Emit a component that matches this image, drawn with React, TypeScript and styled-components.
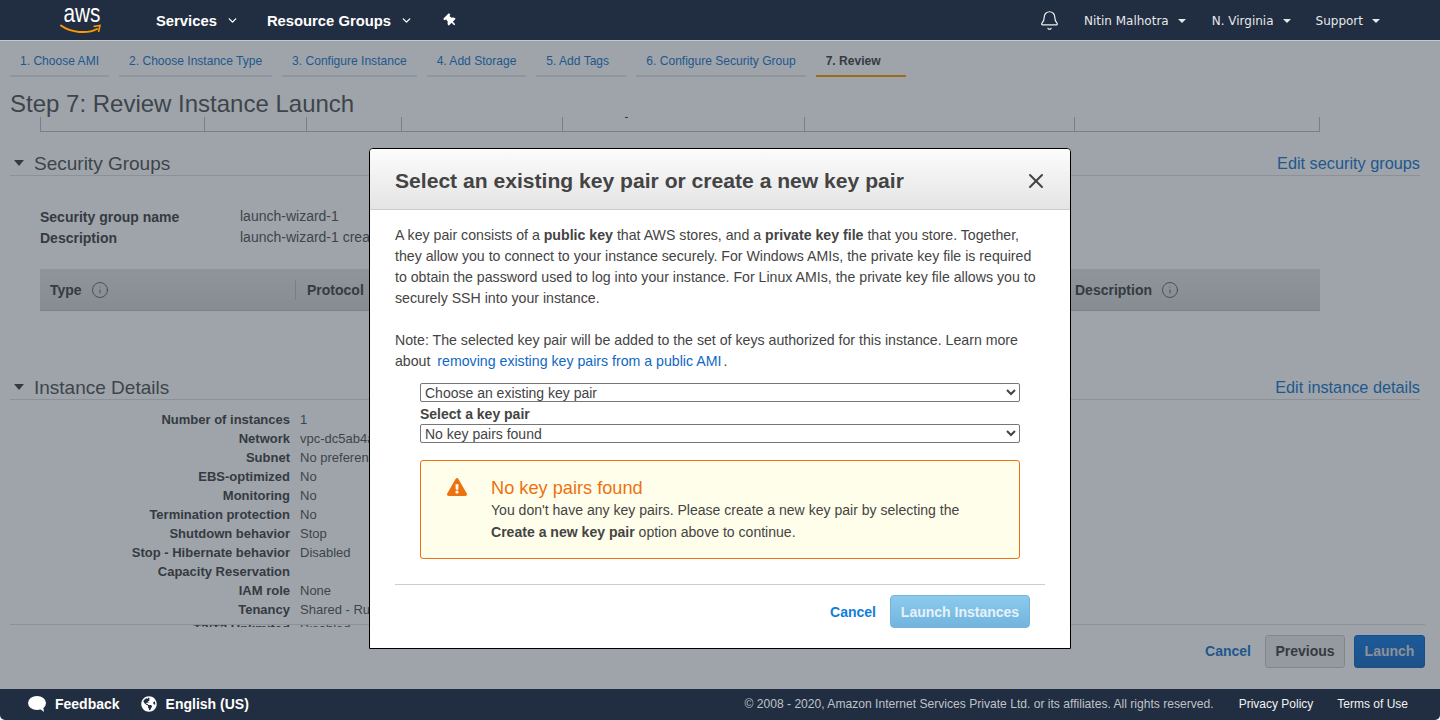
import React from 'react'
import styled, { createGlobalStyle } from 'styled-components'
import { Bell, ChevronDown, Info, X } from 'lucide-react'
import { FaExclamationTriangle, FaGlobeAmericas, FaThumbtack } from 'react-icons/fa'

const GlobalStyle = createGlobalStyle`
  html, body {
    margin: 0;
    padding: 0;
    height: 100%;
    overflow: hidden;
    background: #fff;
    font-family: "Liberation Sans", Arial, sans-serif;
    color: #444;
  }
  * {
    box-sizing: border-box;
  }
`

const Page = styled.div`
  position: relative;
  width: 1440px;
  height: 720px;
  display: flex;
  flex-direction: column;
  overflow: hidden;
`
const TopBar = styled.header`
  flex: none;
  height: 41px;
  display: flex;
  align-items: center;
  background: #212d40;
  border-bottom: 1px solid #c3c8cd;
  color: #fff;
  padding-left: 60px;
  padding-right: 60px;
`
const Logo = styled.div`
  position: relative;
  width: 41px;
  height: 32px;
  margin-right: 55px;
  margin-top: -2px;
`
const LogoText = styled.span`
  display: block;
  text-align: center;
  font-size: 25px;
  line-height: 20px;
  transform: scaleX(0.83);
  color: #fff;
`
const LogoSmile = styled.svg`
  position: absolute;
  left: 0;
  top: 21px;
`
const MainNav = styled.button<{ $gap: number }>`
  display: flex;
  align-items: center;
  gap: 9px;
  margin-right: ${p => p.$gap}px;
  background: none;
  border: 0;
  padding: 1px 0 0;
  color: #fff;
  font-family: inherit;
  font-size: 14.8px;
  font-weight: bold;
`
const PinIcon = styled(FaThumbtack)`
  font-size: 13px;
  transform: rotate(-45deg);
  color: #fff;
`
const Spacer = styled.div`
  flex: 1;
`
const BellIcon = styled(Bell)`
  margin-right: 24px;
  color: #eee;
`
const UserNav = styled.button<{ $gap: number }>`
  display: flex;
  align-items: center;
  gap: 9px;
  margin-right: ${p => p.$gap}px;
  background: none;
  border: 0;
  padding: 1px 0 0;
  color: #e6e8ea;
  font-family: "DejaVu Sans", Verdana, sans-serif;
  font-size: 12px;
`
const Caret = styled.span`
  width: 0;
  height: 0;
  border-left: 4px solid transparent;
  border-right: 4px solid transparent;
  border-top: 4px solid #e6e8ea;
`

const Main = styled.main`
  position: relative;
  flex: 1;
  min-height: 0;
  display: flex;
  flex-direction: column;
  background: #fff;
`
const Tabs = styled.nav`
  flex: none;
  display: flex;
  gap: 10px;
  padding: 0 10px;
  height: 36px;
`
const Tab = styled.a<{ $active?: boolean }>`
  display: flex;
  align-items: center;
  min-width: 90px;
  height: 36px;
  padding: 5px 10px 0;
  font-size: 12.06px;
  color: ${p => (p.$active ? '#444' : '#1b78cc')};
  font-weight: ${p => (p.$active ? 'bold' : 'normal')};
  border-bottom: 2px solid ${p => (p.$active ? '#ff9900' : '#e4e6e8')};
`
const Heading = styled.h1`
  flex: none;
  margin: 0;
  padding: 12px 10px 0;
  height: 40px;
  font-size: 24px;
  line-height: 30px;
  font-weight: normal;
  color: #555;
`
const Scroller = styled.div`
  flex: none;
  height: 510px;
  overflow: hidden;
  padding: 0 20px 0 10px;
`
const TableEnd = styled.div`
  display: flex;
  height: 15px;
  margin: 0 0 0 30px;
  width: 1280px;
  border-bottom: 1px solid #bbb;
  border-left: 1px solid #bbb;
`
const TableEndCell = styled.div<{ $width: number }>`
  flex: none;
  width: ${p => p.$width}px;
  border-right: 1px solid #bbb;
`
const ClippedMark = styled.div`
  width: 3px;
  height: 1px;
  margin-left: 62px;
  background: #444;
`
const SectionHead = styled.div<{ $top: number }>`
  display: flex;
  align-items: flex-end;
  height: 30px;
  margin-top: ${p => p.$top}px;
  border-bottom: 1px solid #ddd;
  padding-left: 4px;
`
const Triangle = styled.span`
  width: 0;
  height: 0;
  border-left: 5.5px solid transparent;
  border-right: 5.5px solid transparent;
  border-top: 6px solid #444;
  margin: 0 10px 9px 0;
`
const SectionTitle = styled.h2`
  flex: 1;
  margin: 0;
  font-size: 19px;
  line-height: 22px;
  font-weight: normal;
  color: #555;
`
const EditLink = styled.a`
  font-size: 16.3px;
  line-height: 19px;
  color: #1b78cc;
  margin-bottom: 2px;
`
const GroupInfo = styled.dl`
  display: grid;
  grid-template-columns: 200px 1fr;
  grid-auto-rows: 21px;
  align-items: center;
  margin: 30px 0 0 30px;
  font-size: 14px;
`
const GroupLabel = styled.dt`
  font-weight: bold;
`
const GroupValue = styled.dd`
  margin: 0;
  margin-top: -2px;
  color: #555;
`
const RulesHead = styled.div`
  display: flex;
  align-items: center;
  width: 1280px;
  height: 42px;
  margin: 21px 0 0 30px;
  padding-left: 10px;
  font-size: 14px;
  font-weight: bold;
  background: linear-gradient(#e4e4e4, #d5d5d5);
  border-bottom: 1px solid #c4c4c4;
`
const RulesColumn = styled.div<{ $width: number }>`
  flex: none;
  display: flex;
  align-items: center;
  gap: 9px;
  width: ${p => p.$width}px;
  height: 20px;
`
const RulesDivider = styled.div`
  flex: none;
  width: 1px;
  height: 20px;
  background: #bbb;
  margin-right: 11px;
`
const DetailRows = styled.dl`
  display: grid;
  grid-template-columns: 280px 1fr;
  column-gap: 10px;
  grid-auto-rows: 19px;
  align-items: center;
  margin: 10px 0 0 0;
  font-size: 13px;
`
const DetailLabel = styled.dt`
  text-align: right;
  font-weight: bold;
`
const DetailValue = styled.dd`
  margin: 0;
  color: #555;
`
const Actions = styled.div`
  flex: none;
  display: flex;
  align-items: center;
  justify-content: flex-end;
  margin: -3px 15px 0 10px;
  height: 61px;
  padding: 0 0 8px;
  border-top: 1px solid #ddd;
`
const TextButton = styled.a<{ $light?: boolean }>`
  font-size: 14px;
  font-weight: bold;
  color: ${p => (p.$light ? '#0f7edb' : '#1b78cc')};
`
const PreviousButton = styled.button`
  width: 80px;
  height: 33px;
  margin-left: 14px;
  font-family: inherit;
  font-size: 14px;
  font-weight: bold;
  color: #444;
  background: #eee;
  border: 1px solid #ccc;
  border-radius: 3px;
`
const LaunchButton = styled.button`
  width: 71px;
  height: 33px;
  margin-left: 9px;
  font-family: inherit;
  font-size: 14px;
  font-weight: bold;
  color: #ddd;
  background: linear-gradient(#1a7be0, #1a6cc4);
  border: 1px solid #1266c8;
  border-radius: 3px;
`

const Backdrop = styled.div`
  position: absolute;
  inset: 0;
  background: rgba(35, 47, 62, 0.44);
`

const BottomBar = styled.footer`
  flex: none;
  height: 31px;
  display: flex;
  align-items: center;
  background: #212d40;
  color: #fff;
  padding: 0 32px 1px 28px;
  font-size: 12px;
  border-radius: 0 0 5px 5px;
`
const FooterTool = styled.span<{ $gap: number }>`
  display: flex;
  align-items: center;
  gap: 9px;
  margin-right: ${p => p.$gap}px;
  font-size: 14px;
  font-weight: bold;
`
const Copyright = styled.span`
  color: #bfc3c9;
  font-size: 12.1px;
  margin-right: 25px;
`
const FooterLink = styled.a<{ $gap?: number }>`
  color: #f2f3f3;
  margin-left: ${p => p.$gap || 0}px;
`

const ModalLayer = styled.div`
  position: absolute;
  inset: 0;
  display: flex;
  justify-content: center;
  align-items: flex-start;
  padding-top: 148px;
`
const Modal = styled.section`
  width: 702px;
  height: 501px;
  background: #fff;
  border: 1px solid #000;
  border-radius: 4px 4px 0 0;
`
const ModalHead = styled.div`
  display: flex;
  align-items: center;
  justify-content: space-between;
  height: 61px;
  padding: 3px 22px 0 25px;
  border-radius: 3px 3px 0 0;
  background: linear-gradient(#fcfcfc, #e4e4e4);
  border-bottom: 1px solid #ccc;
`
const ModalTitle = styled.h3`
  margin: 0;
  font-size: 21.1px;
  font-weight: bold;
  color: #444;
`
const CloseIcon = styled(X)`
  color: #444;
`
const ModalBody = styled.div`
  padding: 15px 25px 0;
  font-size: 14.16px;
  line-height: 21px;
  color: #444;
`
const Paragraph = styled.p`
  margin: 0 0 21px;
`
const ModalLink = styled.a`
  color: #0f68c4;
  margin-left: 3px;
  margin-right: 2px;
`
const FormBlock = styled.div`
  margin: -10px 50px 0;
`
const KeySelect = styled.select`
  display: block;
  width: 600px;
  height: 19px;
  padding: 0;
  font-family: inherit;
  font-size: 14px;
  color: #444;
  background: #fff;
  border: 1px solid #767676;
  border-radius: 2px;
`
const FieldLabel = styled.label`
  display: block;
  height: 22px;
  line-height: 24px;
  font-size: 14px;
  font-weight: bold;
`
const Alert = styled.div`
  display: flex;
  width: 600px;
  height: 99px;
  margin-top: 17px;
  padding: 16px 0 0 26px;
  background: #fffeea;
  border: 1px solid #ec7211;
  border-radius: 3px;
`
const AlertIcon = styled(FaExclamationTriangle)`
  flex: none;
  font-size: 20px;
  color: #ec7211;
  margin-right: 24px;
`
const AlertTitle = styled.div`
  font-size: 18.2px;
  line-height: 22px;
  color: #ec7211;
`
const AlertText = styled.div`
  margin-top: 0;
  font-size: 14.06px;
  line-height: 22px;
  color: #444;
`
const ModalFooter = styled.div`
  display: flex;
  align-items: center;
  justify-content: flex-end;
  margin: 25px 25px 0;
  padding: 10px 15px 0 0;
  border-top: 1px solid #ccc;
`
const DisabledButton = styled.button`
  width: 140px;
  height: 33px;
  margin-left: 14px;
  font-family: inherit;
  font-size: 14px;
  font-weight: bold;
  color: #e6f2fa;
  background: linear-gradient(#8ccbee, #72b4de);
  border: 1px solid #73b3dc;
  border-radius: 4px;
`

const tabs = [
  '1. Choose AMI',
  '2. Choose Instance Type',
  '3. Configure Instance',
  '4. Add Storage',
  '5. Add Tags',
  '6. Configure Security Group',
]

const tableEndCells = [164, 102, 95, 161, 242, 270, 245]

const details: [string, string][] = [
  ['Number of instances', '1'],
  ['Network', 'vpc-dc5ab4a6'],
  ['Subnet', 'No preference'],
  ['EBS-optimized', 'No'],
  ['Monitoring', 'No'],
  ['Termination protection', 'No'],
  ['Shutdown behavior', 'Stop'],
  ['Stop - Hibernate behavior', 'Disabled'],
  ['Capacity Reservation', ''],
  ['IAM role', 'None'],
  ['Tenancy', 'Shared - Run a shared hardware instance'],
  ['T2/T3 Unlimited', 'Disabled'],
]

const FeedbackIcon = () => (
  <svg width="18" height="16" viewBox="0 0 18 16">
    <ellipse cx="9" cy="7" rx="9" ry="7" fill="#fff" />
    <path d="M11 12 L16 16 L15 10 Z" fill="#fff" />
  </svg>
)

const App: React.FC = () => {
  return (
    <Page>
      <GlobalStyle />
      <TopBar>
        <Logo>
          <LogoText>aws</LogoText>
          <LogoSmile width="41" height="12" viewBox="0 0 41 12">
            <path d="M1 1.5 C 11 9, 28 10, 37 5" fill="none" stroke="#f90" strokeWidth="2" strokeLinecap="round" />
            <path d="M33.5 2.5 L40 1.5 L38.5 8" fill="none" stroke="#f90" strokeWidth="1.6" />
          </LogoSmile>
        </Logo>
        <MainNav $gap={28}>
          Services <ChevronDown size={13} strokeWidth={2.5} />
        </MainNav>
        <MainNav $gap={31}>
          Resource Groups <ChevronDown size={13} strokeWidth={2.5} />
        </MainNav>
        <PinIcon />
        <Spacer />
        <BellIcon size={21} strokeWidth={1.4} />
        <UserNav $gap={26}>
          Nitin Malhotra <Caret />
        </UserNav>
        <UserNav $gap={25}>
          N. Virginia <Caret />
        </UserNav>
        <UserNav $gap={0}>
          Support <Caret />
        </UserNav>
      </TopBar>

      <Main>
        <Tabs>
          {tabs.map(tab => (
            <Tab key={tab}>{tab}</Tab>
          ))}
          <Tab $active>7. Review</Tab>
        </Tabs>
        <Heading>Step 7: Review Instance Launch</Heading>
        <Scroller>
          <TableEnd>
            {tableEndCells.map((width, index) => (
              <TableEndCell key={index} $width={width}>
                {index === 4 && <ClippedMark />}
              </TableEndCell>
            ))}
          </TableEnd>
          <SectionHead $top={14}>
            <Triangle />
            <SectionTitle>Security Groups</SectionTitle>
            <EditLink>Edit security groups</EditLink>
          </SectionHead>
          <GroupInfo>
            <GroupLabel>Security group name</GroupLabel>
            <GroupValue>launch-wizard-1</GroupValue>
            <GroupLabel>Description</GroupLabel>
            <GroupValue>launch-wizard-1 created 2020-03-06</GroupValue>
          </GroupInfo>
          <RulesHead>
            <RulesColumn $width={245}>
              Type <Info size={18} strokeWidth={1} />
            </RulesColumn>
            <RulesDivider />
            <RulesColumn $width={768}>Protocol</RulesColumn>
            <RulesColumn $width={200}>
              Description <Info size={18} strokeWidth={1} />
            </RulesColumn>
          </RulesHead>
          <SectionHead $top={59}>
            <Triangle />
            <SectionTitle>Instance Details</SectionTitle>
            <EditLink>Edit instance details</EditLink>
          </SectionHead>
          <DetailRows>
            {details.map(([label, value]) => (
              <React.Fragment key={label}>
                <DetailLabel>{label}</DetailLabel>
                <DetailValue>{value}</DetailValue>
              </React.Fragment>
            ))}
          </DetailRows>
        </Scroller>
        <Actions>
          <TextButton>Cancel</TextButton>
          <PreviousButton>Previous</PreviousButton>
          <LaunchButton>Launch</LaunchButton>
        </Actions>
        <Backdrop />
      </Main>

      <BottomBar>
        <FooterTool $gap={21}>
          <FeedbackIcon /> Feedback
        </FooterTool>
        <FooterTool $gap={0}>
          <FaGlobeAmericas size={16} /> English (US)
        </FooterTool>
        <Spacer />
        <Copyright>© 2008 - 2020, Amazon Internet Services Private Ltd. or its affiliates. All rights reserved.</Copyright>
        <FooterLink>Privacy Policy</FooterLink>
        <FooterLink $gap={24}>Terms of Use</FooterLink>
      </BottomBar>

      <ModalLayer>
        <Modal>
          <ModalHead>
            <ModalTitle>Select an existing key pair or create a new key pair</ModalTitle>
            <CloseIcon size={24} strokeWidth={2} />
          </ModalHead>
          <ModalBody>
            <Paragraph>
              A key pair consists of a <b>public key</b> that AWS stores, and a <b>private key file</b> that you store.
              Together, they allow you to connect to your instance securely. For Windows AMIs, the private key file is
              required to obtain the password used to log into your instance. For Linux AMIs, the private key file
              allows you to securely SSH into your instance.
            </Paragraph>
            <Paragraph>
              Note: The selected key pair will be added to the set of keys authorized for this instance. Learn more
              about <ModalLink>removing existing key pairs from a public AMI</ModalLink>.
            </Paragraph>
          </ModalBody>
          <FormBlock>
            <KeySelect defaultValue="existing">
              <option value="existing">Choose an existing key pair</option>
              <option value="new">Create a new key pair</option>
            </KeySelect>
            <FieldLabel>Select a key pair</FieldLabel>
            <KeySelect defaultValue="none">
              <option value="none">No key pairs found</option>
            </KeySelect>
            <Alert>
              <AlertIcon />
              <div>
                <AlertTitle>No key pairs found</AlertTitle>
                <AlertText>
                  You don't have any key pairs. Please create a new key pair by selecting the
                  <br />
                  <b>Create a new key pair</b> option above to continue.
                </AlertText>
              </div>
            </Alert>
          </FormBlock>
          <ModalFooter>
            <TextButton $light>Cancel</TextButton>
            <DisabledButton>Launch Instances</DisabledButton>
          </ModalFooter>
        </Modal>
      </ModalLayer>
    </Page>
  )
}

export default App
